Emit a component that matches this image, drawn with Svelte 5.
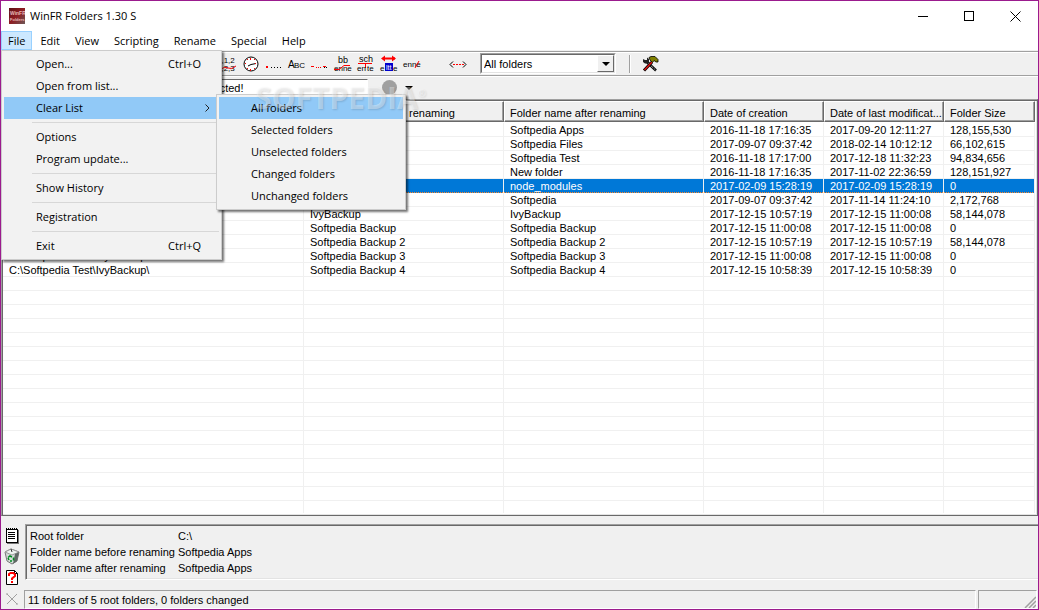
<script lang="ts">
  type Entry = { label: string; keys?: string; children?: string[] };

  const menus = ['Edit', 'View', 'Scripting', 'Rename', 'Special', 'Help'];

  /* Each inner list is a group, groups are divided by a separator */
  const fileMenu: Entry[][] = [
    [
      { label: 'Open...', keys: 'Ctrl+O' },
      { label: 'Open from list...' },
      {
        label: 'Clear List',
        children: [
          'All folders',
          'Selected folders',
          'Unselected folders',
          'Changed folders',
          'Unchanged folders'
        ]
      }
    ],
    [{ label: 'Options' }, { label: 'Program update...' }],
    [{ label: 'Show History' }],
    [{ label: 'Registration' }],
    [{ label: 'Exit', keys: 'Ctrl+Q' }]
  ];

  const columns = [
    'Root folder',
    'Folder name before renaming',
    'Folder name after renaming',
    'Date of creation',
    'Date of last modificat...',
    'Folder Size'
  ];

  const rows = [
    ['C:\\', 'Softpedia Apps', 'Softpedia Apps', '2016-11-18 17:16:35', '2017-09-20 12:11:27', '128,155,530'],
    ['C:\\', 'Softpedia Files', 'Softpedia Files', '2017-09-07 09:37:42', '2018-02-14 10:12:12', '66,102,615'],
    ['C:\\', 'Softpedia Test', 'Softpedia Test', '2016-11-18 17:17:00', '2017-12-18 11:32:23', '94,834,656'],
    ['C:\\', 'New folder', 'New folder', '2016-11-18 17:16:35', '2017-11-02 22:36:59', '128,151,927'],
    ['C:\\', 'node_modules', 'node_modules', '2017-02-09 15:28:19', '2017-02-09 15:28:19', '0'],
    ['C:\\', 'Softpedia', 'Softpedia', '2017-09-07 09:37:42', '2017-11-14 11:24:10', '2,172,768'],
    ['C:\\', 'IvyBackup', 'IvyBackup', '2017-12-15 10:57:19', '2017-12-15 11:00:08', '58,144,078'],
    ['C:\\', 'Softpedia Backup', 'Softpedia Backup', '2017-12-15 11:00:08', '2017-12-15 11:00:08', '0'],
    ['C:\\', 'Softpedia Backup 2', 'Softpedia Backup 2', '2017-12-15 10:57:19', '2017-12-15 10:57:19', '58,144,078'],
    ['C:\\Softpedia Test\\IvyBackup\\', 'Softpedia Backup 3', 'Softpedia Backup 3', '2017-12-15 11:00:08', '2017-12-15 11:00:08', '0'],
    ['C:\\Softpedia Test\\IvyBackup\\', 'Softpedia Backup 4', 'Softpedia Backup 4', '2017-12-15 10:58:39', '2017-12-15 10:58:39', '0']
  ];

  const details = [
    ['Root folder', 'C:\\'],
    ['Folder name before renaming', 'Softpedia Apps'],
    ['Folder name after renaming', 'Softpedia Apps']
  ];

  let selected = $state(4);
  let message = $state('No script selected!');
  let listHeight = $state(400);

  /* Blank grid rows below the data */
  const blanks = $derived(Math.max(0, Math.ceil((listHeight - 22) / 14) - rows.length));
</script>

<div class="window">
  <!-- Title bar -->
  <header class="titlebar">
    <svg class="app-icon" width="16" height="16" viewBox="0 0 16 16" aria-hidden="true">
      <defs>
        <linearGradient id="appRed" x1="0" y1="0" x2="1" y2="1">
          <stop offset="0" stop-color="#5c1015" />
          <stop offset="0.5" stop-color="#8e1c22" />
          <stop offset="1" stop-color="#6e5a58" />
        </linearGradient>
      </defs>
      <rect width="16" height="16" fill="url(#appRed)" />
      <text x="1" y="7" font-size="5" font-weight="bold" fill="#e8b8b8">WinFR</text>
      <text x="1" y="13" font-size="4" font-weight="bold" fill="#e8b8b8">Folders</text>
    </svg>
    <span class="title">WinFR Folders 1.30 S</span>
    <button class="caption" aria-label="Minimize">
      <svg width="11" height="11" shape-rendering="crispEdges"><path d="M0 5.5h10" stroke="#000" /></svg>
    </button>
    <button class="caption" aria-label="Maximize">
      <svg width="11" height="11" shape-rendering="crispEdges"><path d="M.5 .5h9v9h-9z" fill="none" stroke="#000" /></svg>
    </button>
    <button class="caption" aria-label="Close">
      <svg width="11" height="11"><path d="M.5 .5l10 10M10.5 .5l-10 10" stroke="#000" /></svg>
    </button>
  </header>

  <!-- Menu bar, with the File menu dropped down -->
  <nav class="menubar">
    <div class="menu-root">
      <button class="tab open">File</button>
      <div class="popup file-menu">
        {#each fileMenu as group, g}
          {#if g > 0}<hr />{/if}
          {#each group as entry}
            <div class="entry">
              <button class="item" class:hot={entry.children}>
                <span>{entry.label}</span>
                {#if entry.keys}<span>{entry.keys}</span>{/if}
                {#if entry.children}
                  <svg class="chevron" width="5" height="8"><path d="M.5 .5l3.5 3.5l-3.5 3.5" fill="none" stroke="#222" /></svg>
                {/if}
              </button>
              {#if entry.children}
                <div class="popup submenu">
                  {#each entry.children as child, i}
                    <button class="item" class:hot={i === 0}>{child}</button>
                  {/each}
                </div>
              {/if}
            </div>
          {/each}
        {/each}
      </div>
    </div>
    {#each menus as name}
      <button class="tab">{name}</button>
    {/each}
  </nav>

  <!-- Toolbar -->
  <div class="toolbar">
    <button class="tool" aria-label="Number">
      <svg width="22" height="18">
        <text x="0" y="8" font-size="8">0,1,2</text>
        <text x="0" y="16" font-size="8">1,2,3</text>
        <path d="M4 14q4-3 7-1t8-2" fill="none" stroke="#f00" />
      </svg>
    </button>
    <button class="tool" aria-label="Date and time">
      <svg width="22" height="18">
        <circle cx="11" cy="9" r="7" fill="#fff" stroke="#000" />
        <path d="M8 11l3-1.500l5-1" fill="none" stroke="#000" />
        <path d="M10.500 3v2M10.500 14v2M5 8.500h1M15 8.500h1M7 4.500h1M14 4.500h1M7 13.500h1M14 13.500h1" stroke="#f00" />
      </svg>
    </button>
    <button class="tool" aria-label="First characters">
      <svg width="22" height="18" shape-rendering="crispEdges">
        <rect x="3" y="11" width="2" height="2" fill="#f00" />
        <path d="M8 12.500h12" stroke="#000" stroke-dasharray="1 2" />
      </svg>
    </button>
    <button class="tool" aria-label="Upper case">
      <svg width="22" height="18">
        <text x="2" y="13" font-size="10">A</text>
        <text x="8" y="13" font-size="8">BC</text>
      </svg>
    </button>
    <button class="tool" aria-label="Middle characters">
      <svg width="22" height="18" shape-rendering="crispEdges">
        <path d="M2 11.500h4M14 11.500h4" stroke="#f00" stroke-dasharray="3 1" />
        <path d="M7 12.500h6" stroke="#f00" stroke-dasharray="1 1" />
        <path d="M15 12.500h4" stroke="#000" stroke-dasharray="1 1" />
      </svg>
    </button>
    <button class="tool" aria-label="Replace">
      <svg width="22" height="18">
        <text x="6" y="8" font-size="9">bb</text>
        <text x="2" y="16" font-size="8">enne</text>
        <path d="M2 14.500h5l5-4h6" fill="none" stroke="#f00" />
      </svg>
    </button>
    <button class="tool" aria-label="Insert">
      <svg width="22" height="18">
        <text x="4" y="7" font-size="9">sch</text>
        <path d="M3 8.500h14M10.500 9v4" stroke="#f00" />
        <text x="2" y="16" font-size="8">en</text>
        <text x="12" y="16" font-size="8">te</text>
      </svg>
    </button>
    <button class="tool" aria-label="Move">
      <svg width="22" height="18">
        <path d="M5 3.500h12" stroke="#f00" stroke-width="2" />
        <path d="M3 3.500l4-3v6zM18 3.500l-4-3v6z" fill="#f00" />
        <rect x="7" y="8" width="8" height="8" fill="#00c" />
        <text x="2" y="16" font-size="8">e</text>
        <text x="8" y="15" font-size="7" fill="#fff">ltt</text>
        <text x="15" y="16" font-size="8">e</text>
      </svg>
    </button>
    <button class="tool" aria-label="Delete">
      <svg width="22" height="18">
        <text x="2" y="12" font-size="8">enne</text>
        <path d="M14 13l4-7" stroke="#f00" />
      </svg>
    </button>
    <button class="tool range" aria-label="Range">
      <svg width="22" height="18">
        <path d="M6 6.500l-3 3l3 3M16 6.500l3 3l-3 3" fill="none" stroke="#000" />
        <path d="M6 9.500h11" stroke="#f00" stroke-dasharray="2 1" shape-rendering="crispEdges" />
      </svg>
    </button>
    <div class="combo">
      <select aria-label="Folder filter">
        <option>All folders</option>
        <option>Selected folders</option>
        <option>Changed folders</option>
      </select>
      <span class="drop" aria-hidden="true"></span>
    </div>
    <div class="divider"></div>
    <button class="tool" aria-label="Tools">
      <svg width="18" height="18" viewBox="0 0 18 18">
        <path d="M6 7l9 8.500" stroke="#000" stroke-width="2.500" />
        <path d="M7 8l7.500 7" stroke="#fff" stroke-dasharray="1 1" />
        <path d="M3 15.500L11 7" stroke="#000" stroke-width="3" />
        <path d="M3.500 15L11 7" stroke="#e01010" stroke-width="1.500" />
        <path d="M2 4v3l2 1.500h3l1-1V4L6 2.500V5H4z" fill="#222" />
        <path d="M8 2.500l2-1h4l3 3v2.500h-2L13 5.500l-1.500 2L9 5z" fill="#808000" stroke="#000" stroke-width="0.800" />
      </svg>
    </button>
  </div>

  <!-- Message line -->
  <div class="messagebar">
    <input class="message" type="text" aria-label="Message" bind:value={message} />
    <button class="run" aria-label="Run"></button>
    <button class="more" aria-label="More"></button>
  </div>

  <!-- Folder list -->
  <main class="list" bind:clientHeight={listHeight}>
    <table>
      <colgroup>
        <col class="root" /><col class="name" /><col class="name" />
        <col class="date" /><col class="date" /><col />
      </colgroup>
      <thead>
        <tr>
          {#each columns as column}<th>{column}</th>{/each}
        </tr>
      </thead>
      <tbody>
        {#each rows as row, r}
          <tr class:selected={r === selected} onclick={() => (selected = r)}>
            {#each row as cell}<td>{cell}</td>{/each}
          </tr>
        {/each}
        {#each { length: blanks } as _}
          <tr>
            {#each columns as _c}<td></td>{/each}
          </tr>
        {/each}
      </tbody>
    </table>
  </main>

  <!-- Details and status bar -->
  <footer class="bottom">
    <div class="side">
      <button class="side-btn" aria-label="Notes">
        <svg width="14" height="17" shape-rendering="crispEdges">
          <path d="M1 2h11v13H1z" fill="#fff" stroke="#000" />
          <path d="M13.500 3v13M2 16.500h12" stroke="#777" />
          <path d="M1 1.500h12" stroke="#000" stroke-dasharray="1 1" />
          <path d="M3 5.500h7M3 7.500h7M3 9.500h7M3 11.500h7" stroke="#000" />
        </svg>
      </button>
      <button class="side-btn" aria-label="Recycle">
        <svg width="16" height="17">
          <path d="M1 4l6-3l8 3l-2 9l-5 3l-5-3z" fill="#d3dcd8" stroke="#777" />
          <path d="M1 4l7 3l7-3l-8-3z" fill="#eef3f0" stroke="#999" />
          <path d="M11 6l4-2l-2 9l-4 3z" fill="#5f6864" />
          <path d="M7 1l1 3" stroke="#333" />
          <path d="M4 9.500l2-1.500l2 1M9.500 9.500v3M8 13H6M5 12l-1-2" fill="none" stroke="#008a20" stroke-width="1.500" />
        </svg>
      </button>
      <button class="side-btn" aria-label="Help">
        <svg width="14" height="17">
          <path d="M1.500 1.500h8l3 3v11h-11z" fill="#fff" stroke="#000" />
          <path d="M9.500 1.500v3h3" fill="none" stroke="#000" />
          <path d="M4 7V5l1.500-1h3L10 5.500V7l-3 2.500v1.500" fill="none" stroke="#f00" stroke-width="2" />
          <rect x="6" y="12" width="2" height="2" fill="#f00" />
        </svg>
      </button>
      <button class="side-btn" aria-label="Clear">
        <svg width="14" height="14">
          <path d="M2 2l10 10M12 2L2 12" stroke="#a0a0a0" stroke-width="1" />
          <path d="M1 2h2M11 12h2" stroke="#a0a0a0" />
        </svg>
      </button>
    </div>
    <div class="panels">
      <dl class="details">
        {#each details as [term, value]}
          <dt>{term}</dt>
          <dd>{value}</dd>
        {/each}
      </dl>
      <div class="status">
        <div class="pane grow">11 folders of 5 root folders, 0 folders changed</div>
        <div class="pane grip">
          <svg width="12" height="12"><path d="M1 12L12 1M5 12l7-7M9 12l3-3" stroke="#a0a0a0" stroke-width="1.500" /></svg>
        </div>
      </div>
    </div>
  </footer>

  <div class="watermark" aria-hidden="true">SOFTPEDIA<sup>®</sup></div>
</div>

<style>
  :global(body) {
    background: #f0f0f0;
  }

  .window {
    position: relative;
    box-sizing: border-box;
    height: 100vh;
    display: flex;
    flex-direction: column;
    border: 1px solid #9b1b8e;
    background: #f0f0f0;
    color: #000;
    font: 11px/14px 'Liberation Sans', Arial, sans-serif;
    overflow: hidden;
  }

  button {
    margin: 0;
    padding: 0;
    border: 0;
    background: none;
    color: inherit;
    font: inherit;
  }

  svg {
    display: block;
  }

  /* ── Title bar ── */

  .titlebar {
    flex: none;
    display: flex;
    align-items: center;
    height: 30px;
    padding-left: 8px;
    background: #fff;
  }

  .title {
    flex: 1;
    margin-left: 5px;
    font: 11px/16px 'Open Sans', sans-serif;
  }

  .caption {
    display: flex;
    align-items: center;
    justify-content: center;
    width: 46px;
    height: 28px;
  }

  /* ── Menus ── */

  .menubar {
    flex: none;
    display: flex;
    gap: 1px;
    height: 19px;
    border-bottom: 1px solid #f0f0f0;
    background: #fff;
    font: 11px/16px 'Open Sans', sans-serif;
  }

  .menu-root {
    position: relative;
    z-index: 2;
  }

  .tab {
    height: 19px;
    padding: 0 7px;
  }

  .tab.open {
    padding: 0 6px;
    border: 1px solid #99d1ff;
    background: #cce8ff;
  }

  .popup {
    position: absolute;
    box-sizing: border-box;
    padding: 2px;
    border: 1px solid #ccc;
    background: #f2f2f2;
    box-shadow: 2px 2px 2px rgba(0, 0, 0, 0.55);
  }

  .file-menu {
    top: 19px;
    left: 0;
    width: 221px;
  }

  .submenu {
    top: -3px;
    left: 212px;
    width: 190px;
  }

  .entry {
    position: relative;
  }

  .item {
    display: flex;
    align-items: center;
    justify-content: space-between;
    width: 100%;
    height: 22px;
    padding: 0 18px 0 32px;
  }

  .item.hot {
    background: #91c9f7;
  }

  .chevron {
    margin-right: -9px;
  }

  .file-menu hr {
    height: 1px;
    margin: 3px 0 3px 28px;
    border: 0;
    background: #d7d7d7;
  }

  /* ── Toolbar ── */

  .toolbar,
  .messagebar {
    flex: none;
    box-sizing: border-box;
    display: flex;
    align-items: center;
    height: 24px;
    border-top: 1px solid #a0a0a0;
    box-shadow: inset 0 1px #fff;
  }

  .toolbar {
    padding-left: 216px;
  }

  .tool {
    width: 23px;
    height: 20px;
  }

  .range {
    margin: 0 10px 0 23px;
  }

  .combo {
    position: relative;
    box-sizing: border-box;
    width: 136px;
    height: 21px;
    border: 1px solid;
    border-color: #a0a0a0 #fff #fff #a0a0a0;
  }

  .combo select {
    box-sizing: border-box;
    width: 100%;
    height: 19px;
    padding: 0 2px;
    border: 1px solid;
    border-color: #696969 #e3e3e3 #e3e3e3 #696969;
    border-radius: 0;
    background: #fff;
    color: #000;
    font: inherit;
    appearance: none;
  }

  .drop {
    position: absolute;
    top: 1px;
    right: 1px;
    bottom: 1px;
    display: flex;
    align-items: center;
    justify-content: center;
    width: 15px;
    border: 1px solid;
    border-color: #fff #696969 #696969 #fff;
    background: #f0f0f0;
    pointer-events: none;
  }

  .drop::after,
  .more::after {
    content: '';
    border: 4px solid transparent;
    border-top-color: #000;
    border-bottom: 0;
  }

  .divider {
    width: 1px;
    height: 18px;
    margin: 0 10px 0 13px;
    border-right: 1px solid #fff;
    background: #a0a0a0;
  }

  /* ── Message line ── */

  .messagebar {
    padding-left: 147px;
  }

  .message {
    box-sizing: border-box;
    width: 220px;
    height: 18px;
    padding: 0 4px;
    border: 1px solid;
    border-color: #696969 #fff #fff #696969;
    background: #fff;
    font: inherit;
  }

  .run {
    width: 15px;
    height: 15px;
    margin-left: 14px;
    border-radius: 50%;
    background: #a0a0a0;
  }

  .more {
    display: flex;
    margin-left: 8px;
  }

  /* ── Folder list ── */

  .list {
    flex: 1 1 0;
    min-height: 0;
    border: 1px solid;
    border-color: #a0a0a0 #696969 #696969 #a0a0a0;
    background: #fff;
    box-shadow: inset 1px 1px #696969, inset -1px -1px #e3e3e3;
    padding: 1px 2px 2px 1px;
    overflow: clip;
    overflow-clip-margin: content-box;
  }

  table {
    width: 100%;
    border-spacing: 0;
    table-layout: fixed;
  }

  .root {
    width: 301px;
  }

  .name {
    width: 200px;
  }

  .date {
    width: 120px;
  }

  th {
    box-sizing: border-box;
    height: 21px;
    padding: 2px 5px 0;
    border: 1px solid;
    border-color: #fff #696969 #696969 #fff;
    background: #f0f0f0;
    box-shadow: inset -1px -1px #a0a0a0;
    font-weight: normal;
    text-align: left;
    white-space: nowrap;
    overflow: hidden;
  }

  /* white line under the header */
  thead::after {
    content: '';
    display: table-row;
    height: 1px;
  }

  td {
    box-sizing: border-box;
    height: 14px;
    padding: 1px 6px 0;
    border-right: 1px solid #f0f0f0;
    border-bottom: 1px solid #f0f0f0;
    line-height: 12px;
    white-space: nowrap;
  }

  /* focus dots run along the bottom edge of the selection */
  .selected td {
    padding-bottom: 1px;
    border-bottom: 0;
    background:
      repeating-linear-gradient(90deg, #ff8728 0 1px, #0078d7 1px 2px) bottom / 100% 1px no-repeat,
      #0078d7;
    color: #fff;
  }

  /* ── Details and status bar ── */

  .bottom {
    flex: none;
    display: flex;
    height: 93px;
  }

  .side {
    display: flex;
    flex-direction: column;
    width: 23px;
    padding-top: 9px;
  }

  .side-btn {
    display: flex;
    align-items: center;
    justify-content: center;
    width: 22px;
    height: 22px;
  }

  .panels {
    flex: 1;
    display: flex;
    flex-direction: column;
    justify-content: space-between;
    padding-top: 8px;
  }

  .details {
    display: grid;
    grid-template-columns: 148px 1fr;
    grid-auto-rows: 16px;
    margin: 0 0 0 1px;
    padding: 3px 4px;
    border: 1px solid;
    border-color: #a0a0a0 transparent #fff #a0a0a0;
    border-right: 0;
    box-shadow: inset 1px 1px #696969, inset 0 -1px #e3e3e3;
    line-height: 16px;
  }

  dd {
    margin: 0;
  }

  .status {
    display: flex;
    gap: 2px;
    height: 19px;
    padding-right: 1px;
  }

  .pane {
    box-sizing: border-box;
    padding: 0 3px;
    border: 1px solid;
    border-color: #a0a0a0 #fff #fff #a0a0a0;
    line-height: 18px;
  }

  .grow {
    flex: 1;
  }

  .grip {
    display: flex;
    align-items: flex-end;
    justify-content: flex-end;
    width: 59px;
    padding: 0;
  }

  /* ── Translucent mark over the menus ── */

  .watermark {
    position: absolute;
    z-index: 3;
    top: 80px;
    left: 254px;
    color: rgba(255, 255, 255, 0.36);
    font: bold 30px/34px 'Open Sans', sans-serif;
    text-shadow: 1px 1px 2px rgba(0, 0, 0, 0.13);
    pointer-events: none;
  }

  .watermark sup {
    font-size: 10px;
    line-height: 10px;
    vertical-align: 12px;
  }
</style>
